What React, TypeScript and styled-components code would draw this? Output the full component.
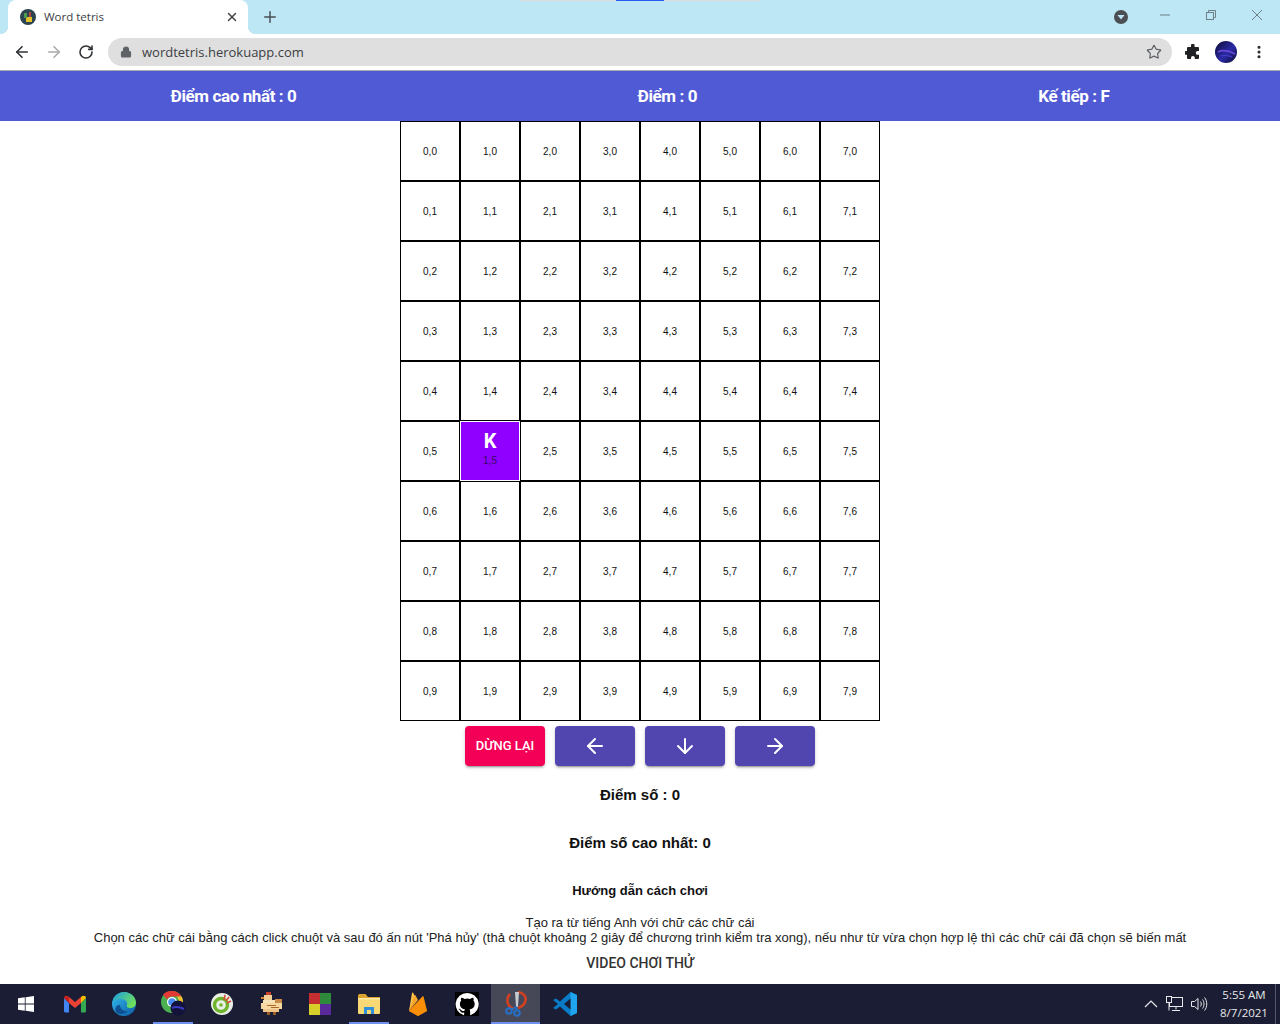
import React from 'react';
import styled, { createGlobalStyle } from 'styled-components';
import { ArrowLeft, ArrowRight, ArrowDown, RotateCw, Plus, X, Star, Lock, MoreVertical } from 'lucide-react';

const COLS = 8;
const ROWS = 10;

const GlobalStyle = createGlobalStyle`
    html, body { margin: 0; padding: 0; background: #fff; }
    body { font-family: "Liberation Sans", Arial, sans-serif; overflow: hidden; }
`;

const Page = styled.div`
    width: 1280px;
    height: 1024px;
    display: flex;
    flex-direction: column;
    overflow: hidden;
`;

/* browser chrome */
const TabStrip = styled.div`
    position: relative;
    height: 34px;
    background: #bde7f4;
    display: flex;
    align-items: flex-end;
    padding-left: 8px;
    flex-shrink: 0;
`;
const ShareBar = styled.div`
    position: absolute;
    top: 0;
    left: 520px;
    display: flex;
    height: 1px;
`;
const ShareSeg = styled.div<{ $w: number; $blue?: boolean }>`
    width: ${p => p.$w}px;
    background: ${p => (p.$blue ? '#2a5bf0' : '#dedede')};
`;
const Tab = styled.div`
    position: relative;
    width: 240px;
    height: 34px;
    background: #fff;
    border-radius: 8px 8px 0 0;
    display: flex;
    align-items: center;
    padding: 0 9px 0 12px;
    box-sizing: border-box;
    &::before, &::after {
        content: '';
        position: absolute;
        bottom: 0;
        width: 8px;
        height: 8px;
    }
    &::before { left: -8px; background: radial-gradient(circle at 0 0, transparent 8px, #fff 8.5px); }
    &::after { right: -8px; background: radial-gradient(circle at 100% 0, transparent 8px, #fff 8.5px); }
`;
const TabTitle = styled.span`
    flex: 1;
    margin-left: 8px;
    margin-bottom: 2px;
    font: 11.5px "Open Sans", "Noto Sans", sans-serif;
    color: #3c4043;
`;
const NewTab = styled.div`
    width: 28px;
    height: 34px;
    margin-left: 8px;
    display: flex;
    align-items: center;
    justify-content: center;
    color: #4a4f54;
`;
const StripRight = styled.div`
    margin-left: auto;
    height: 34px;
    display: flex;
    align-items: center;
`;
const ProfileDot = styled.div`
    width: 14px;
    height: 14px;
    margin-right: 14px;
    display: flex;
`;
const WinBtn = styled.div`
    width: 46px;
    height: 30px;
    margin-bottom: 4px;
    display: flex;
    align-items: center;
    justify-content: center;
`;

const Toolbar = styled.div`
    height: 36px;
    background: #fff;
    border-bottom: 1px solid #a9a9ad;
    display: flex;
    align-items: center;
    padding: 0 6px;
    flex-shrink: 0;
`;
const NavBtn = styled.div<{ $off?: boolean }>`
    width: 32px;
    display: flex;
    justify-content: center;
    color: ${p => (p.$off ? '#a8aaad' : '#2f3236')};
`;
const Omnibox = styled.div`
    width: 1064px;
    height: 28px;
    margin-left: 6px;
    border-radius: 14px;
    background: #dfdfdf;
    display: flex;
    align-items: center;
    padding: 0 10px 0 12px;
    box-sizing: border-box;
    color: #5f6368;
`;
const Url = styled.span`
    flex: 1;
    margin-left: 10px;
    font: 13px "Open Sans", "Noto Sans", sans-serif;
    color: #3c4043;
`;
const ToolIcons = styled.div`
    display: flex;
    align-items: center;
    margin-left: 13px;
    gap: 14px;
    color: #26282b;
`;

/* app */
const AppBar = styled.header`
    height: 50px;
    background: #515ad5;
    display: flex;
    justify-content: space-around;
    align-items: center;
    flex-shrink: 0;
    color: #fff;
    font: 700 17px Roboto, sans-serif;
    letter-spacing: -0.4px;
`;
const Main = styled.main`
    flex: 1;
    display: flex;
    flex-direction: column;
    align-items: center;
    min-height: 0;
`;
const Board = styled.div`
    display: grid;
    grid-template-columns: repeat(${COLS}, 60px);
    grid-auto-rows: 60px;
`;
const Cell = styled.div<{ $filled?: boolean }>`
    box-sizing: border-box;
    border: 1px solid ${p => (p.$filled ? '#fff' : '#000')};
    background: ${p => (p.$filled ? '#8f00ff' : '#fff')};
    display: flex;
    flex-direction: column;
    align-items: center;
    justify-content: center;
    font-size: 10px;
    padding-top: 2px;
`;
const Letter = styled.div`
    font: 700 20px/22px Roboto, sans-serif;
    color: #fff;
    margin-top: -7px;
`;
const CellLabel = styled.span<{ $filled?: boolean }>`
    line-height: 12px;
    margin-top: ${p => (p.$filled ? '3px' : '0')};
    color: ${p => (p.$filled ? '#3a0a66' : '#111')};
`;
const Controls = styled.div`
    display: flex;
    gap: 10px;
    margin-top: 5px;
`;
const GameButton = styled.button<{ $stop?: boolean }>`
    width: 80px;
    height: 40px;
    padding: 0 0 ${p => (p.$stop ? '2px' : '0')};
    border: 0;
    border-radius: 4px;
    background: ${p => (p.$stop ? '#f50057' : '#5146b0')};
    color: #fff;
    font: 500 13px Roboto, sans-serif;
    text-transform: uppercase;
    display: flex;
    align-items: center;
    justify-content: center;
    box-shadow: 0 3px 1px -2px rgba(0,0,0,.2), 0 2px 2px 0 rgba(0,0,0,.14), 0 1px 5px 0 rgba(0,0,0,.12);
`;
const Score = styled.h4<{ $top: number }>`
    margin: ${p => p.$top}px 0 0;
    font-size: 15px;
    line-height: 18px;
    font-weight: 700;
    color: #111;
`;
const GuideTitle = styled.h5`
    margin: 31px 0 0;
    font-size: 13px;
    line-height: 16px;
    font-weight: 700;
    color: #111;
`;
const GuideText = styled.p`
    margin: 16px 0 0;
    font-size: 13px;
    line-height: 15px;
    text-align: center;
    color: #222;
`;
const VideoLabel = styled.div`
    margin-top: 10px;
    font: 500 14px/16px Roboto, sans-serif;
    color: #333;
`;

/* windows taskbar */
const Taskbar = styled.footer`
    height: 40px;
    background: #1a1d33;
    display: flex;
    align-items: stretch;
    padding-left: 1px;
    flex-shrink: 0;
`;
const TaskItem = styled.div<{ $active?: boolean; $running?: boolean }>`
    position: relative;
    width: 49px;
    display: flex;
    align-items: center;
    justify-content: center;
    background: ${p => (p.$active ? '#464858' : 'transparent')};
    &::after {
        content: '';
        display: ${p => (p.$active || p.$running ? 'block' : 'none')};
        position: absolute;
        bottom: 0;
        height: 2px;
        left: ${p => (p.$active ? '0' : '5px')};
        right: ${p => (p.$active ? '0' : '4px')};
        background: #6f90ee;
    }
`;
const Tray = styled.div`
    margin-left: auto;
    display: flex;
    align-items: center;
    color: #e8e8ea;
`;
const TrayIcon = styled.div`
    width: 24px;
    display: flex;
    justify-content: center;
`;
const Clock = styled.div`
    width: 62px;
    margin-left: 2px;
    text-align: center;
    font: 11.5px/18px "Open Sans", "Noto Sans", sans-serif;
    color: #e8e8ea;
`;
const ShowDesktop = styled.div`
    width: 1px;
    height: 40px;
    background: #55576a;
    margin-right: 4px;
`;

const Favicon = () => (
    <svg width="16" height="16" viewBox="0 0 16 16">
        <circle cx="8" cy="8" r="8" fill="#2c4450" />
        <rect x="6" y="8" width="6" height="5" fill="#e3c22b" />
        <rect x="4" y="4" width="3" height="5" fill="#4f9a4c" />
        <rect x="9" y="3" width="2" height="5" fill="#b5453c" />
    </svg>
);

const Avatar = () => (
    <svg width="22" height="22" viewBox="0 0 22 22">
        <defs>
            <linearGradient id="av" x1="0" y1="0" x2="1" y2="1">
                <stop offset="0" stopColor="#0c0a2e" />
                <stop offset="0.55" stopColor="#2b2aa8" />
                <stop offset="1" stopColor="#0b0a2a" />
            </linearGradient>
        </defs>
        <circle cx="11" cy="11" r="11" fill="url(#av)" />
        <path d="M3 11c5-3 11-1 17 2" stroke="#6a49d8" strokeWidth="1.6" fill="none" />
        <path d="M5 15c4-1 8-1 12 1" stroke="#3f3cc4" strokeWidth="1.2" fill="none" />
    </svg>
);

const Puzzle = () => (
    <svg width="16" height="16" viewBox="0 0 16 16" fill="#202124">
        <path d="M6 1.5a1.8 1.8 0 0 1 3.6 0V3H13a1 1 0 0 1 1 1v3h-1.3a1.9 1.9 0 0 0 0 3.8H14V14a1 1 0 0 1-1 1H9.8v-1.2a1.9 1.9 0 0 0-3.8 0V15H3a1 1 0 0 1-1-1v-3.2H.9a1.9 1.9 0 0 1 0-3.8H2V4a1 1 0 0 1 1-1h3z" />
    </svg>
);

const WinLogo = () => (
    <svg width="16" height="16" viewBox="0 0 16 16" fill="#fff">
        <path d="M0 2.3 6.8 1.3V7.6H0zM7.6 1.2 16 0V7.6H7.6zM0 8.4H6.8V14.7L0 13.7zM7.6 8.4H16V16L7.6 14.8z" />
    </svg>
);

const GmailIcon = () => (
    <svg width="22" height="18" viewBox="0 0 22 18">
        <path d="M0 3v13a1.5 1.5 0 0 0 1.5 1.5H5V8z" fill="#4285f4" />
        <path d="M22 3v13a1.5 1.5 0 0 1-1.5 1.5H17V8z" fill="#34a853" />
        <path d="M5 8V2l6 5 6-5v6l-6 5z" fill="#ea4335" />
        <path d="M0 3c0-2.5 3-3 5-1v6z" fill="#c5221f" />
        <path d="M22 3c0-2.5-3-3-5-1v6z" fill="#fbbc04" />
    </svg>
);

const EdgeIcon = () => (
    <svg width="24" height="24" viewBox="0 0 24 24">
        <defs>
            <linearGradient id="edgeA" x1="0" y1="0" x2="1" y2="1">
                <stop offset="0" stopColor="#35c1f1" />
                <stop offset="1" stopColor="#0c59a4" />
            </linearGradient>
            <linearGradient id="edgeB" x1="0" y1="0" x2="1" y2="0.6">
                <stop offset="0" stopColor="#1b9de2" />
                <stop offset="1" stopColor="#6fe05a" />
            </linearGradient>
        </defs>
        <circle cx="12" cy="12" r="12" fill="url(#edgeA)" />
        <path d="M1 9C3 2 9 0 12 0c7 0 12 5 12 11 0 3-3 5-6 5-2 0-4-1-3-3 1-3-2-6-6-6-3 0-6 1-8 2z" fill="url(#edgeB)" />
        <path d="M8 13c0 4 4 7 8 6-3 3-8 4-11 2-3-3-2-8 3-8z" fill="#0f4f94" />
    </svg>
);

const ChromeIcon = () => (
    <svg width="26" height="26" viewBox="0 0 26 26" style={{ marginLeft: 2 }}>
        <circle cx="11" cy="11" r="11" fill="#4caf50" />
        <path d="M11 0a11 11 0 0 1 9.500 5.500H11A5.500 5.500 0 0 0 6 8.500L2 3.500A11 11 0 0 1 11 0z" fill="#e53935" />
        <path d="M20.500 5.500A11 11 0 0 1 11 22l4.800-8.300a5.500 5.500 0 0 0 0-8.200z" fill="#fbc02d" />
        <circle cx="11" cy="11" r="5" fill="#fff" />
        <circle cx="11" cy="11" r="3.800" fill="#4a8df0" />
        <circle cx="17" cy="17" r="7.500" fill="#12123a" />
        <path d="M11 17c4-2 8-1 12 1" stroke="#3b3ac0" strokeWidth="2" fill="none" />
    </svg>
);

const CocCocIcon = () => (
    <svg width="22" height="22" viewBox="0 0 22 22">
        <circle cx="11" cy="11" r="11" fill="#e9efe6" />
        <circle cx="10" cy="12" r="6.500" fill="none" stroke="#6fb52c" strokeWidth="3.400" />
        <circle cx="10" cy="12" r="1.800" fill="#6fb52c" />
        <path d="M14 2l-1 5M18 4l-3 4M20 8l-4 2" stroke="#d9473c" strokeWidth="1.600" />
    </svg>
);

const ChickenIcon = () => (
    <svg width="24" height="24" viewBox="0 0 24 24" shapeRendering="crispEdges">
        <rect x="7" y="0" width="5" height="3" fill="#c8402a" />
        <rect x="5" y="3" width="8" height="5" fill="#f3cf95" />
        <rect x="2" y="5" width="3" height="2" fill="#d9822b" />
        <rect x="4" y="8" width="12" height="3" fill="#f7e2b8" />
        <rect x="2" y="11" width="21" height="6" fill="#f5d7a2" />
        <rect x="16" y="7" width="7" height="4" fill="#c98a45" />
        <rect x="8" y="13" width="9" height="1" fill="#a96a2c" />
        <rect x="12" y="15" width="8" height="1" fill="#a96a2c" />
        <rect x="4" y="17" width="16" height="3" fill="#eec488" />
        <rect x="8" y="20" width="3" height="3" fill="#9a5b25" />
        <rect x="14" y="20" width="3" height="3" fill="#9a5b25" />
    </svg>
);

const SquaresIcon = () => (
    <svg width="22" height="24" viewBox="0 0 22 24" shapeRendering="crispEdges">
        <rect x="0" y="1" width="11" height="11" fill="#c62f2f" />
        <rect x="11" y="1" width="11" height="11" fill="#2e8b3b" />
        <rect x="0" y="12" width="11" height="11" fill="#d8d02a" />
        <rect x="11" y="12" width="11" height="11" fill="#5a2a9a" />
    </svg>
);

const FolderIcon = () => (
    <svg width="22" height="20" viewBox="0 0 22 20">
        <path d="M0 1.500A1.500 1.500 0 0 1 1.500 0h6L10 3h12v2H0z" fill="#d9a32d" />
        <rect x="0" y="4" width="22" height="16" rx="1" fill="#f8d775" />
        <rect x="0" y="4" width="22" height="1.400" fill="#fdeaa8" />
        <path d="M6 20v-7h10v7h-3v-4H9v4z" fill="#2f8fd8" />
    </svg>
);

const FirebaseIcon = () => (
    <svg width="18" height="24" viewBox="0 0 18 24">
        <path d="M0 19 3 1c.1-.6.8-.7 1.100-.2L7.200 6.500z" fill="#ffc24a" />
        <path d="M9 8 6.600 3.500c-.3-.5-1-.5-1.200 0L0 19z" fill="#f4a52c" />
        <path d="M13.500 4.500c.3-.4.9-.3 1 .3L18 19l-8 4.600a2 2 0 0 1-2 0L0 19z" fill="#ffa000" />
        <path d="M13.500 4.500 0 19l8 4.600a2 2 0 0 0 2 0L18 19 14.500 4.800c-.1-.6-.7-.7-1-.3z" fill="#f6820c" opacity="0.55" />
    </svg>
);

const GithubIcon = () => (
    <svg width="24" height="24" viewBox="0 0 16 16" style={{ background: '#000' }}>
        <path
            fill="#fff"
            d="M8 .6a7.600 7.600 0 0 0-2.400 14.800c.4.100.5-.2.5-.4v-1.300c-2.100.5-2.600-1-2.600-1-.3-.9-.8-1.100-.8-1.100-.7-.5.100-.5.100-.5.8.100 1.200.8 1.200.8.7 1.200 1.800.8 2.300.6.100-.5.3-.8.5-1-1.700-.2-3.500-.8-3.500-3.700 0-.8.3-1.500.8-2-.1-.2-.3-1 .1-2 0 0 .6-.2 2.100.8a7 7 0 0 1 3.800 0c1.400-1 2.100-.8 2.100-.8.4 1 .2 1.800.1 2 .5.5.8 1.200.8 2 0 2.900-1.800 3.500-3.500 3.700.3.200.5.7.5 1.400V15c0 .2.100.5.5.4A7.600 7.600 0 0 0 8 .6z"
        />
    </svg>
);

const SnipIcon = () => (
    <svg width="22" height="26" viewBox="0 0 22 26">
        <path d="M5 3a9 9 0 0 0 4 15M13 1c6 1 9 5 7 10-1 3-4 5-7 6" stroke="#d3401f" strokeWidth="2.600" fill="none" />
        <path d="M10 1l1 15 2 0 1-15z" fill="#c7c9d0" />
        <circle cx="4" cy="20" r="2.800" fill="none" stroke="#2470c8" strokeWidth="2" />
        <circle cx="12" cy="22" r="2.800" fill="none" stroke="#2470c8" strokeWidth="2" />
        <path d="M6 19l5-3 1 3" stroke="#2470c8" strokeWidth="1.600" fill="none" />
    </svg>
);

const VscodeIcon = () => (
    <svg width="24" height="24" viewBox="0 0 24 24">
        <path d="M17.500 0 24 3v18l-6.500 3L7 14.500l-4 3L0 16l5-4-5-4 3-1.500 4 3z" fill="#0a7cc7" />
        <path d="M17.500 0 24 3v18l-6.500 3z" fill="#20a4ee" />
        <path d="M17.500 6.500 11 12l6.500 5.500z" fill="#1a1d33" />
    </svg>
);

const NetworkIcon = () => (
    <svg width="18" height="16" viewBox="0 0 18 16" fill="none" stroke="#e8e8ea" strokeWidth="1">
        <rect x="3.500" y="1.500" width="13" height="9" />
        <path d="M10 10.500v3M6 14.500h8" />
        <rect x="0.500" y="0.500" width="5" height="6" fill="#1a1d33" />
        <path d="M3 6.500v8" />
    </svg>
);

const VolumeIcon = () => (
    <svg width="17" height="14" viewBox="0 0 17 14" fill="none" stroke="#e8e8ea" strokeWidth="1">
        <path d="M0.500 4.500h3L7 1.500v11l-3.500-3h-3z" />
        <path d="M9.500 4.500c1 1.500 1 3.500 0 5M11.500 2.500c2 2.500 2 6.500 0 9M13.500 0.500c3 3.500 3 9.500 0 13" />
    </svg>
);

const taskIcons = [
    { key: 'win', icon: <WinLogo /> },
    { key: 'gmail', icon: <GmailIcon /> },
    { key: 'edge', icon: <EdgeIcon /> },
    { key: 'chrome', icon: <ChromeIcon />, running: true },
    { key: 'coccoc', icon: <CocCocIcon /> },
    { key: 'chicken', icon: <ChickenIcon /> },
    { key: 'squares', icon: <SquaresIcon /> },
    { key: 'folder', icon: <FolderIcon />, running: true },
    { key: 'firebase', icon: <FirebaseIcon /> },
    { key: 'github', icon: <GithubIcon /> },
    { key: 'snip', icon: <SnipIcon />, active: true },
    { key: 'vscode', icon: <VscodeIcon /> },
];

export default function App() {
    const cells = [];
    for (let y = 0; y < ROWS; y++) {
        for (let x = 0; x < COLS; x++) {
            const filled = x === 1 && y === 5;
            cells.push(
                <Cell key={`${x},${y}`} $filled={filled}>
                    {filled && <Letter>K</Letter>}
                    <CellLabel $filled={filled}>{x},{y}</CellLabel>
                </Cell>
            );
        }
    }

    return (
        <Page>
            <GlobalStyle />
            <TabStrip>
                <ShareBar>
                    <ShareSeg $w={96} />
                    <ShareSeg $w={48} $blue />
                    <ShareSeg $w={96} />
                </ShareBar>
                <Tab>
                    <Favicon />
                    <TabTitle>Word tetris</TabTitle>
                    <X size={14} strokeWidth={2.4} color="#3c4043" />
                </Tab>
                <NewTab><Plus size={18} strokeWidth={2} /></NewTab>
                <StripRight>
                    <ProfileDot>
                        <svg width="14" height="14" viewBox="0 0 14 14">
                            <circle cx="7" cy="7" r="7" fill="#4b4f53" />
                            <path d="M3.500 5h7L7 9.500z" fill="#bde7f4" />
                        </svg>
                    </ProfileDot>
                    <WinBtn>
                        <svg width="10" height="10" viewBox="0 0 10 10"><path d="M0 5h10" stroke="#6d7f87" /></svg>
                    </WinBtn>
                    <WinBtn>
                        <svg width="10" height="10" viewBox="0 0 10 10" fill="none" stroke="#6d7f87">
                            <rect x="0.500" y="2.500" width="7" height="7" />
                            <path d="M2.500 2.500v-2h7v7h-2" />
                        </svg>
                    </WinBtn>
                    <WinBtn>
                        <svg width="10" height="10" viewBox="0 0 10 10"><path d="M0 0l10 10M10 0L0 10" stroke="#6d7f87" /></svg>
                    </WinBtn>
                </StripRight>
            </TabStrip>
            <Toolbar>
                <NavBtn><ArrowLeft size={18} strokeWidth={2.2} /></NavBtn>
                <NavBtn $off><ArrowRight size={18} strokeWidth={2.2} /></NavBtn>
                <NavBtn><RotateCw size={16} strokeWidth={2.4} /></NavBtn>
                <Omnibox>
                    <Lock size={12} strokeWidth={2.4} fill="#5f6368" />
                    <Url>wordtetris.herokuapp.com</Url>
                    <Star size={16} strokeWidth={1.8} />
                </Omnibox>
                <ToolIcons>
                    <Puzzle />
                    <Avatar />
                    <MoreVertical size={16} strokeWidth={2.6} />
                </ToolIcons>
            </Toolbar>

            <AppBar>
                <span>Điểm cao nhất : 0</span>
                <span>Điểm : 0</span>
                <span>Kế tiếp : F</span>
            </AppBar>

            <Main>
                <Board>{cells}</Board>
                <Controls>
                    <GameButton $stop>Dừng lại</GameButton>
                    <GameButton><ArrowLeft size={24} strokeWidth={2} /></GameButton>
                    <GameButton><ArrowDown size={24} strokeWidth={2} /></GameButton>
                    <GameButton><ArrowRight size={24} strokeWidth={2} /></GameButton>
                </Controls>
                <Score $top={20}>Điểm số : 0</Score>
                <Score $top={30}>Điểm số cao nhất: 0</Score>
                <GuideTitle>Hướng dẫn cách chơi</GuideTitle>
                <GuideText>
                    Tạo ra từ tiếng Anh với chữ các chữ cái<br />
                    Chọn các chữ cái bằng cách click chuột và sau đó ấn nút 'Phá hủy' (thả chuột khoảng 2 giây để chương trình kiểm tra xong), nếu như từ vừa chọn hợp lệ thì các chữ cái đã chọn sẽ biến mất
                </GuideText>
                <VideoLabel>VIDEO CHƠI THỬ</VideoLabel>
            </Main>

            <Taskbar>
                {taskIcons.map(t => (
                    <TaskItem key={t.key} $active={t.active} $running={t.running}>{t.icon}</TaskItem>
                ))}
                <Tray>
                    <TrayIcon>
                        <svg width="14" height="8" viewBox="0 0 14 8" fill="none" stroke="#e8e8ea" strokeWidth="1.200"><path d="M1 7l6-6 6 6" /></svg>
                    </TrayIcon>
                    <TrayIcon><NetworkIcon /></TrayIcon>
                    <TrayIcon><VolumeIcon /></TrayIcon>
                    <Clock>5:55 AM<br />8/7/2021</Clock>
                    <ShowDesktop />
                </Tray>
            </Taskbar>
        </Page>
    );
}
